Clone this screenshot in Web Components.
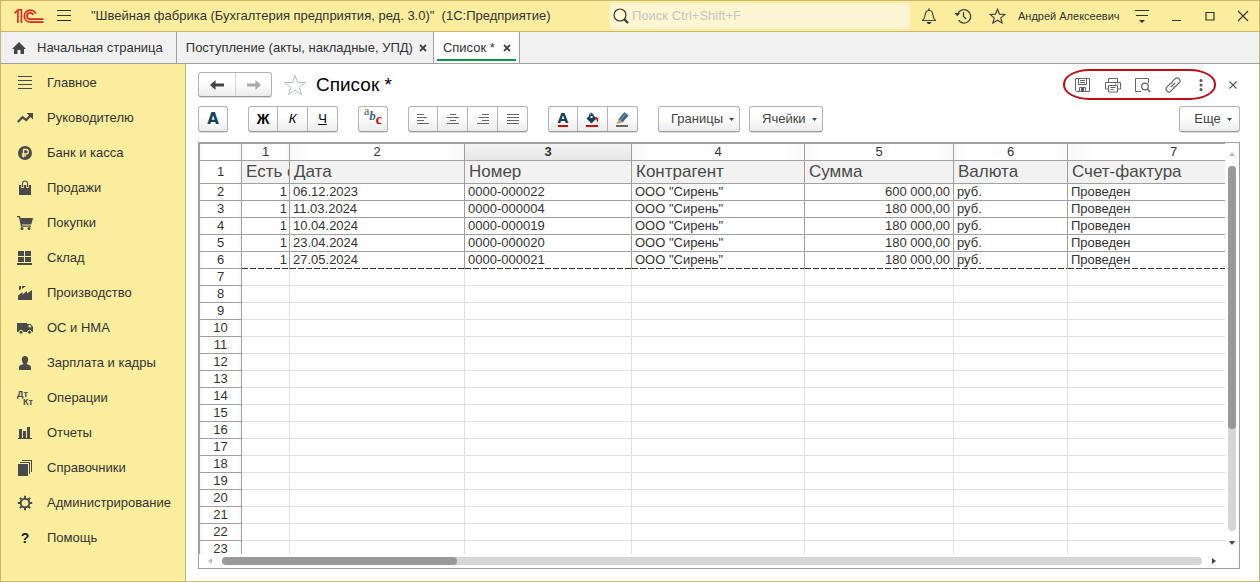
<!DOCTYPE html>
<html lang="ru">
<head>
<meta charset="utf-8">
<title>Список — 1С:Предприятие</title>
<style>
  html, body { margin: 0; height: 100%; }
  body {
    --yellow: #fbed9e;
    --gold: #c8b96a;
    --line: #a0a0a0;
    --ink: #333;
    font: 13px/16px "Liberation Sans", Arial, sans-serif;
    color: var(--ink);
    background: #fff;
  }
</style>
</head>
<body>
<app-window>
  <title-bar slot="title" user="Андрей Алексеевич">"Швейная фабрика (Бухгалтерия предприятия, ред. 3.0)"&nbsp; (1С:Предприятие)</title-bar>

  <tab-strip slot="tabs">
    <tab-item icon="home">Начальная страница</tab-item>
    <tab-item closable>Поступление (акты, накладные, УПД)</tab-item>
    <tab-item closable active>Список *</tab-item>
  </tab-strip>

  <side-menu slot="side">
    <side-item icon="lines">Главное</side-item>
    <side-item icon="trend">Руководителю</side-item>
    <side-item icon="ruble">Банк и касса</side-item>
    <side-item icon="bag">Продажи</side-item>
    <side-item icon="cart">Покупки</side-item>
    <side-item icon="boxes">Склад</side-item>
    <side-item icon="factory">Производство</side-item>
    <side-item icon="truck">ОС и НМА</side-item>
    <side-item icon="person">Зарплата и кадры</side-item>
    <side-item icon="dtkt">Операции</side-item>
    <side-item icon="chart">Отчеты</side-item>
    <side-item icon="books">Справочники</side-item>
    <side-item icon="gear">Администрирование</side-item>
    <side-item icon="question">Помощь</side-item>
  </side-menu>

  <page-header>Список *</page-header>

  <tool-bar>
    <tool-group><tool-button icon="fontA" label="Шрифт"></tool-button></tool-group>
    <tool-group>
      <tool-button class="bold">Ж</tool-button>
      <tool-button class="italic">К</tool-button>
      <tool-button class="under">Ч</tool-button>
    </tool-group>
    <tool-group><tool-button icon="abc" label="Стиль текста"></tool-button></tool-group>
    <tool-group>
      <tool-button icon="alignLeft" label="Влево"></tool-button>
      <tool-button icon="alignCenter" label="По центру"></tool-button>
      <tool-button icon="alignRight" label="Вправо"></tool-button>
      <tool-button icon="alignJustify" label="По ширине"></tool-button>
    </tool-group>
    <tool-group>
      <tool-button icon="textColor" label="Цвет текста"></tool-button>
      <tool-button icon="fill" label="Цвет фона"></tool-button>
      <tool-button icon="pencil" label="Цвет рамки"></tool-button>
    </tool-group>
    <tool-group><tool-button menu>Границы</tool-button></tool-group>
    <tool-group class="near"><tool-button menu>Ячейки</tool-button></tool-group>
    <tool-group class="end"><tool-button menu>Еще</tool-button></tool-group>
  </tool-bar>

  <spread-sheet></spread-sheet>
</app-window>

<script>
const svg = (w, h, body) =>
  `<svg width="${w}" height="${h}" viewBox="0 0 ${w} ${h}" fill="none" aria-hidden="true">${body}</svg>`;
const bars = (rows) => svg(12, 10, rows.map(([x, w], i) =>
  `<path fill="#666" d="M${x} ${i * 3}h${w}v1h-${w}z"/>`).join(""));

const ICONS = {
  logo: svg(30, 16, `<g stroke="#e0241f" stroke-width="1.7">
    <path d="M.6 5.2 3.9 2.2V15M3.6 1.8 7.4 1.8V15" stroke-width="1.6"/>
    <path d="M21.8 5.6A6 6 0 1 0 16 14.1h13.4"/>
    <path d="M19.2 6.9A3.2 3.2 0 1 0 16 11.2h13.4"/></g>`),
  burger: svg(14, 12, `<path fill="#333" d="M0 0h14v1H0zM0 5h14v1H0zM0 10h14v1H0z"/>`),
  search: svg(16, 16, `<circle cx="7" cy="7" r="6" stroke="#333" stroke-width="1.2"/><path d="m11.500 11.500 3.500 3.500" stroke="#333" stroke-width="2.2"/>`),
  bell: svg(16, 16, `<path d="M1.500 12.500c2-1.600 2.500-3.600 2.700-6C4.400 4 6 2.500 8 2.500s3.600 1.500 3.800 4c.2 2.400.7 4.400 2.700 6z" stroke="#444" stroke-width="1.200" stroke-linejoin="round"/><path fill="#333" d="M7.300.5h1.400v2H7.300zM5.500 14h5l-1.500 2h-2z"/>`),
  history: svg(18, 16, `<path d="M3.600 6.500A6.700 6.700 0 1 1 4.500 12.200" stroke="#444" stroke-width="1.300"/><path fill="#333" d="M.5 5h5.500L3.300 8.300z"/><path d="M9.500 4v4.500l2.700 2.500" stroke="#444" stroke-width="1.300"/>`),
  star: svg(17, 16, `<path d="m8.500 1.300 2 4.800 5.300.4-4 3.400 1.300 5.100-4.600-2.700L3.900 15l1.300-5.100-4-3.400 5.300-.4z" stroke="#444" stroke-width="1.200"/>`),
  starBig: svg(24, 22, `<path d="m12 1.500 2.600 7h7.800l-6.200 4.700 2.200 7.300-6.400-4.400-6.400 4.400 2.200-7.300L1.600 8.500h7.800z" stroke="#b4bac2" stroke-width="1"/>`),
  service: svg(14, 14, `<path fill="#333" d="M0 1h14v1H0zM1 6h12v1H1zM4 11h6l-3 3z"/>`),
  minimize: svg(10, 12, `<path fill="#333" d="M1 10h9v1H1z"/>`),
  maximize: svg(10, 10, `<path d="M1 1.500h8v7.500H1z" stroke="#333" stroke-width="1.200"/>`),
  close: svg(12, 12, `<path d="m1 1 10 10M11 1 1 11" stroke="#333" stroke-width="1.100"/>`),
  closeSmall: svg(8, 8, `<path d="m.5.5 7 7M7.500.5l-7 7" stroke="#555" stroke-width="1.100"/>`),
  tabClose: svg(8, 8, `<path d="m1 1 6 6M7 1 1 7" stroke="#444" stroke-width="1.800"/>`),
  home: svg(14, 12, `<path fill="#444" d="M7 0 14 7h-2v5H8.500V8h-3v4H2V7H0z"/>`),
  back: svg(14, 10, `<path fill="#444" d="M0 5 5.500 0v3.500H14v3H5.500V10z"/>`),
  forward: svg(14, 10, `<path fill="#aaa" d="M14 5 8.500 0v3.500H0v3h8.500V10z"/>`),

  lines: svg(16, 16, `<path fill="#4a4a4a" d="M1 1h14v1H1zM1 5h14v1H1zM1 9h14v1H1zM1 13h14v1H1z"/>`),
  trend: svg(16, 16, `<path d="m.8 12 4.700-4.700L9.300 10l4-4.500" stroke="#4a4a4a" stroke-width="2.200"/><path fill="#4a4a4a" d="M9.500 3H16v6.500z"/>`),
  ruble: svg(16, 16, `<circle cx="8" cy="8" r="7" fill="#4a4a4a"/><path d="M6.500 12.500v-8h2.600a2.200 2.200 0 0 1 0 4.500H4.700M4.700 10.800h4.500" stroke="#fbed9e" stroke-width="1.300"/>`),
  bag: svg(16, 16, `<path fill="#4a4a4a" d="M2 5h12v10H2z"/><path d="M5.500 8V3.500a2.500 2.500 0 0 1 5 0V8" stroke="#fbed9e" stroke-width="2.600"/><path d="M5.500 7V3.500a2.500 2.500 0 0 1 5 0V7" stroke="#4a4a4a" stroke-width="1.100"/>`),
  cart: svg(16, 16, `<path d="M0 1.600h2.500l2 9.600h9.500" stroke="#4a4a4a" stroke-width="1.300"/><path fill="#4a4a4a" d="M3 3h13l-1.700 6.500H4.300z"/><circle cx="5" cy="13.400" r="1.500" fill="#4a4a4a"/><circle cx="12" cy="13.400" r="1.500" fill="#4a4a4a"/>`),
  boxes: svg(16, 16, `<path fill="#4a4a4a" d="M1 1h6v5H1zM8 1h6v5H8zM1 7h6v5H1zM8 7h6v5H8zM0 13h15v2H0z"/>`),
  factory: svg(16, 16, `<path fill="#4a4a4a" d="M1 15V10.500L5.500 7v2.500L10 6v2.500L15 5v10zM2 1h2v3L2 5.500zM5 1h4L5 4z"/>`),
  truck: svg(16, 16, `<path fill="#4a4a4a" d="M0 3h10v9H0zM10 4h3.500L16 7v5h-6z"/><path fill="#fbed9e" d="M11.500 5H13l1.700 2.200h-3.200z"/><g fill="#4a4a4a" stroke="#fbed9e"><circle cx="4" cy="12.200" r="2"/><circle cx="12.500" cy="12.200" r="2"/></g>`),
  person: svg(16, 16, `<path fill="#4a4a4a" d="M8 1c2 0 3.200 1.500 3.200 3.500S10 8.500 9.500 9c1.500.8 4.500.8 4.500 3.500V15H2v-2.500C2 9.800 5 9.800 6.500 9 6 8.500 4.800 6.500 4.800 4.500S6 1 8 1z"/>`),
  dtkt: `<span class="dt">Дт</span><span class="kt">Кт</span>`,
  chart: svg(16, 16, `<path fill="#4a4a4a" d="M2 4h3v9H2zM6 6h3v7H6zM10 2h3v11h-3zM1 13h14v1H1z"/>`),
  books: svg(16, 16, `<path fill="#4a4a4a" d="M1 4h10v12H1zM3 2h10v12h-1V3H3zM5 0h10v12h-1V1H5z"/>`),
  gear: svg(16, 16, `<circle cx="8" cy="8" r="4.300" stroke="#4a4a4a" stroke-width="1.900"/><path d="M8 .8V3M8 13v2.200M.8 8H3M13 8h2.200M2.900 2.900l1.600 1.600M11.500 11.500l1.600 1.600M2.900 13.100l1.600-1.600M11.500 4.500l1.600-1.600" stroke="#4a4a4a" stroke-width="2"/>`),
  question: `<b class="q">?</b>`,

  fontA: `<b class="fa">A</b>`,
  textColor: `<b class="fa small">A</b>`,
  abc: `<span class="abc"><i class="a">a</i><b class="b">b</b><b class="c">c</b></span>`,
  alignLeft: bars([[0, 7], [0, 10], [0, 7], [0, 12]]),
  alignCenter: bars([[3, 6], [0, 12], [3, 6], [0, 12]]),
  alignRight: bars([[5, 7], [2, 10], [5, 7], [0, 12]]),
  alignJustify: bars([[0, 12], [0, 12], [0, 12], [0, 12]]),
  fill: svg(13, 15, `<path fill="#14405f" d="M5.500 1.500 10.500 6.500 5.500 11.500.5 6.500z"/><path d="M3.500 5V2.200a2 2 0 0 1 3.500 0V5" stroke="#14405f"/><path fill="#fff" d="M4.500 4h2v2h-2z"/><path fill="#d40000" d="M9.500 5c2.500 0 3 2 2.500 5.500L10.500 8z"/><path fill="#d40000" d="M0 13h12v2H0z"/>`),
  pencil: svg(13, 15, `<path fill="#3c6786" d="m8.500 0 4 3.500-6 7L2.500 7z"/><path fill="#d8a45c" d="M2.500 7l4 3.500L.5 12z"/><path d="m10 1.500-6 7" stroke="#7ea4bd"/><path fill="#666" d="M0 13h12v2H0z"/>`),
  caret: svg(5, 3, `<path fill="#444" d="M0 0h5L2.500 3z"/>`),

  save: svg(16, 16, `<path d="M.5 1.500h14v13h-13l-1-1z" stroke="#666"/><path d="M3.500 1.500v6h8v-6M5 3.500h5M5 5.500h5" stroke="#666"/><path d="M4.500 14.500v-4h6v4" stroke="#666"/><path fill="#555" d="M6 11h3v3H6z"/>`),
  print: svg(16, 16, `<path d="M3.500 5V1.500h9V5M3.500 12H.5V5.500h15V12h-3M3.500 8.500h9v6.500h-9zM5.500 10.500h5M5.500 12.500h3" stroke="#666"/><path fill="#666" d="M10 6.500h1v1h-1zM12.500 6.500h1v1h-1z"/>`),
  preview: svg(16, 16, `<path d="M6 14.500H.5v-13h13V6" stroke="#666"/><circle cx="10" cy="9.500" r="3.300" stroke="#666" stroke-width="1.300"/><path d="m12.200 12 3 3" stroke="#666" stroke-width="1.500"/>`),
  link: svg(16, 16, `<g stroke="#666" stroke-width="1.200"><path d="m6 10 4-4M6.500 5.500l3.600-3.600a2.700 2.700 0 0 1 4 4l-3.600 3.600a2 2 0 0 1-2 .3M9.500 10.500l-3.600 3.600a2.700 2.700 0 0 1-4-4l3.600-3.600a2 2 0 0 1 2-.3"/></g>`),
  dots: svg(4, 14, `<circle cx="2" cy="2.500" r="1.500" fill="#555"/><circle cx="2" cy="7" r="1.500" fill="#555"/><circle cx="2" cy="11.500" r="1.500" fill="#555"/>`),
};

/* Shared base: stamps a template into an open shadow root. */
class Base extends HTMLElement {
  connectedCallback() {
    if (this.shadowRoot) return;
    const t = document.createElement("template");
    t.innerHTML = `<style>*{box-sizing:border-box}${this.css()}</style>${this.html()}`;
    this.attachShadow({ mode: "open" }).append(t.content.cloneNode(true));
  }
  css() { return ":host{display:block}"; }
  html() { return "<slot></slot>"; }
}

customElements.define("ui-icon", class extends Base {
  css() { return `
    :host { display: inline-flex; flex: none; align-items: center; justify-content: center; }
    svg { display: block; }
    .dt, .kt { font: bold 9px/8px "Liberation Sans", sans-serif; color: #4a4a4a; }
    :host([name=dtkt]) { flex-direction: column; }
    .dt { align-self: flex-start; } .kt { align-self: flex-end; }
    .q { font-size: 14px; color: #222; }
    .fa { font: bold 15px/16px "DejaVu Sans", sans-serif; color: #14405f; }
    .fa.small { font-size: 14px; line-height: 13px; border-bottom: 2px solid #d40000; }
    .abc { display: flex; }
    .a { font: 12px/9px "Liberation Serif", serif; color: #555; }
    .b { font: bold italic 13px/17px "Liberation Serif", serif; color: #3c6786; }
    .c { font: bold 14px/25px "Liberation Serif", serif; color: #d40000; }`; }
  html() { return ICONS[this.getAttribute("name")] || ""; }
});

customElements.define("app-window", class extends Base {
  css() { return `
    :host { display: grid; grid-template: auto auto 1fr / 186px 1fr; height: 100vh; position: relative;
            border-right: 1px solid var(--gold); border-bottom: 1px solid var(--gold); box-sizing: border-box; }
    header, nav.tabs { grid-column: 1 / -1; min-width: 0; }
    nav.side { border-right: 1px solid var(--gold); border-left: 1px solid var(--gold); background: var(--yellow); }
    main { display: flex; flex-direction: column; min-width: 0; min-height: 0; padding: 5px 19px 12px 12px; }`; }
  html() { return `
    <header><slot name="title"></slot></header>
    <nav class="tabs"><slot name="tabs"></slot></nav>
    <nav class="side"><slot name="side"></slot></nav>
    <main><slot></slot></main>`; }
});

customElements.define("title-bar", class extends Base {
  css() { return `
    :host { display: flex; align-items: center; height: 32px; box-sizing: border-box; padding-left: 13px;
            background: var(--yellow); border: 1px solid var(--gold); border-right: 0; }
    button { display: flex; align-items: center; justify-content: center; flex: none; width: 34px; height: 30px;
             padding: 0; border: 0; background: none; }
    button.menu { width: 14px; margin: 0 20px 0 13px; }
    button:last-child { width: 32px; }
    .title { flex: 1; min-width: 0; white-space: nowrap; overflow: hidden; }
    label { display: flex; align-items: center; gap: 3px; flex: none; width: 300px; height: 26px; margin-right: 2px;
            padding: 0 3px; border-radius: 3px; background: #fef6d2; }
    input { flex: 1; min-width: 0; padding: 0; border: 0; outline: 0; background: none; font: inherit; }
    input::placeholder { color: #c9c5b8; opacity: 1; }
    .user { flex: none; width: 111px; padding-left: 4px; font-size: 11px; white-space: nowrap; }`; }
  html() {
    const b = (n, l, c = "") => `<button class="${c}" aria-label="${l}"><ui-icon name="${n}"></ui-icon></button>`;
    return `<ui-icon name="logo"></ui-icon>${b("burger", "Меню", "menu")}
      <span class="title"><slot></slot></span>
      <label><ui-icon name="search"></ui-icon><input type="text" placeholder="Поиск Ctrl+Shift+F" aria-label="Поиск"></label>
      ${b("bell", "Оповещения")}${b("history", "История")}${b("star", "Избранное")}
      <span class="user">${this.getAttribute("user")}</span>
      ${b("service", "Сервис")}${b("minimize", "Свернуть")}${b("maximize", "Развернуть")}${b("close", "Закрыть")}`;
  }
});

customElements.define("tab-strip", class extends Base {
  css() { return `
    :host { display: flex; height: 32px; box-sizing: border-box; background: #f1f1f1;
            border-bottom: 1px solid var(--line); border-left: 1px solid var(--gold); }`; }
});

customElements.define("tab-item", class extends Base {
  css() { return `
    :host { display: flex; align-items: center; gap: 6px; padding: 0 6px 0 9px; border-right: 1px solid var(--line); white-space: nowrap; }
    :host([icon]) { gap: 11px; padding: 0 13px 0 11px; }
    :host([active]) { position: relative; gap: 8px; padding-right: 8px; background: #fff; }
    :host([active])::after { content: ""; position: absolute; left: 3px; right: 3px; bottom: 2px; height: 2px; background: #0d9444; }
    a { color: inherit; text-decoration: none; }
    button { display: flex; padding: 0; border: 0; background: none; }`; }
  html() {
    const icon = this.getAttribute("icon");
    return (icon ? `<ui-icon name="${icon}"></ui-icon>` : "") + `<a href="#"><slot></slot></a>` +
      (this.hasAttribute("closable") ? `<button aria-label="Закрыть вкладку"><ui-icon name="tabClose"></ui-icon></button>` : "");
  }
});

customElements.define("side-menu", class extends Base {
  css() { return ":host { display: block; padding-top: 1px; }"; }
});

customElements.define("side-item", class extends Base {
  css() { return `
    :host { display: block; }
    a { display: flex; align-items: center; gap: 14px; height: 35px; padding-left: 16px; color: inherit; text-decoration: none; white-space: nowrap; }
    ui-icon { width: 16px; height: 16px; }`; }
  html() { return `<a href="#"><ui-icon name="${this.getAttribute("icon")}"></ui-icon><slot></slot></a>`; }
});

customElements.define("page-header", class extends Base {
  css() { return `
    :host { display: flex; align-items: center; height: 31px; }
    .nav { display: flex; height: 25px; border: 1px solid #b4b4b4; border-bottom-color: #999; border-radius: 3px;
           background: linear-gradient(#fff 40%, #ececec); box-shadow: 0 1px 0 #ddd; }
    button { display: flex; align-items: center; justify-content: center; width: 36px; padding: 0; border: 0; background: none; }
    .nav button + button { border-left: 1px solid #d4d4d4; }
    button.fav { width: 24px; margin: 0 9px 0 11px; }
    h1 { flex: 1; margin: 0; font-size: 19px; line-height: 24px; font-weight: normal; color: #000; white-space: nowrap; }
    .actions { display: flex; align-items: center; height: 31px; padding-left: 3px; border: 2px solid #c00d17; border-radius: 26px / 15px; }
    .actions button { width: 30px; }
    .actions button:last-child { width: 26px; }
    button.close { width: 14px; margin-left: 10px; }`; }
  html() {
    const b = (n, l, c = "") => `<button class="${c}" aria-label="${l}"><ui-icon name="${n}"></ui-icon></button>`;
    return `<div class="nav">${b("back", "Назад")}${b("forward", "Вперед")}</div>${b("starBig", "В избранное", "fav")}
      <h1><slot></slot></h1>
      <div class="actions">${b("save", "Сохранить")}${b("print", "Печать")}${b("preview", "Просмотр")}${b("link", "Ссылка")}${b("dots", "Еще действия")}</div>
      ${b("closeSmall", "Закрыть", "close")}`;
  }
});

customElements.define("tool-bar", class extends Base {
  css() { return `:host { display: flex; gap: 20px; padding: 6px 0 10px; }
    ::slotted(.near) { margin-left: -11px; }
    ::slotted(.end) { margin-left: auto; }`; }
});

customElements.define("tool-group", class extends Base {
  css() { return `
    :host { display: flex; height: 26px; box-sizing: border-box; border: 1px solid #b4b4b4; border-bottom-color: #999; border-radius: 3px;
            background: linear-gradient(#fff 40%, #ececec); box-shadow: 0 1px 0 #ddd; }
    ::slotted(tool-button:not(:first-child)) { border-left: 1px solid #b4b4b4; }`; }
});

customElements.define("tool-button", class extends Base {
  css() { return `
    :host { display: flex; width: 30px; box-sizing: border-box; }
    :host(:first-child) { width: 28px; }
    :host([menu]) { width: auto; min-width: 59px; }
    button { display: flex; flex: 1; align-items: center; justify-content: center; gap: 6px; padding: 0; border: 0; background: none;
             font: inherit; color: #444; }
    :host([menu]) button { padding: 0 5px 0 12px; }
    :host(.bold) button { font-weight: bold; font-size: 14px; color: #000; }
    :host(.italic) button { font-style: italic; color: #000; }
    :host(.under) button { text-decoration: underline; color: #000; }`; }
  html() {
    const icon = this.getAttribute("icon"), label = this.getAttribute("label");
    return `<button${label ? ` aria-label="${label}"` : ""}>${icon ? `<ui-icon name="${icon}"></ui-icon>` : "<slot></slot>"}${
      this.hasAttribute("menu") ? `<ui-icon name="caret"></ui-icon>` : ""}</button>`;
  }
});

customElements.define("scroll-bar", class extends Base {
  css() { return `
    :host { display: flex; align-items: center; justify-content: space-between; gap: 10px; padding: 0 9px; }
    .track { flex: 1; height: 8px; border-radius: 4px; background: #d6d6d6; }
    .thumb { width: 24%; height: 8px; border-radius: 4px; background: #999; }
    .s, .e { border: 3px solid transparent; }
    .s { border-right: 4px solid #bbb; border-left: 0; }
    .e { border-left: 4px solid #444; border-right: 0; }
    :host([vertical]) { flex-direction: column; padding: 9px 0; }
    :host([vertical]) .track { width: 8px; }
    :host([vertical]) .thumb { width: 8px; height: 72%; }
    :host([vertical]) .s { border: 3px solid transparent; border-bottom: 4px solid #bbb; border-top: 0; }
    :host([vertical]) .e { border: 3px solid transparent; border-top: 4px solid #444; border-bottom: 0; }`; }
  html() { return `<span class="s"></span><div class="track"><div class="thumb"></div></div><span class="e"></span>`; }
});

const HEAD = ["Есть ф", "Дата", "Номер", "Контрагент", "Сумма", "Валюта", "Счет-фактура"];
const WIDTHS = [48, 175, 167, 173, 149, 114, 212];
const DATA = [
  ["06.12.2023", "0000-000022", "600 000,00"],
  ["11.03.2024", "0000-000004", "180 000,00"],
  ["10.04.2024", "0000-000019", "180 000,00"],
  ["23.04.2024", "0000-000020", "180 000,00"],
  ["27.05.2024", "0000-000021", "180 000,00"],
].map(([d, n, s]) => ["1", d, n, 'ООО "Сирень"', s, "руб.", "Проведен"]);
const LAST_ROW = 23, ACTIVE_COL = 3;

customElements.define("spread-sheet", class extends Base {
  css() { return `
    :host { display: grid; grid-template: 1fr 14px / 1fr 14px; flex: 1; min-height: 0; border: 1px solid var(--line); }
    .view { min-width: 0; min-height: 0; overflow: hidden; border: 1px solid var(--line); border-width: 1px 0 0 1px; }
    scroll-bar:last-child { grid-column: 1 / 2; }
    table { table-layout: fixed; width: 1080px; border-collapse: separate; border-spacing: 0; }
    th, td { height: 17px; padding: 0 3px; border: 0 solid #e2e2e2; border-width: 0 1px 1px 0; font-weight: normal;
             line-height: 16px; text-align: left; white-space: nowrap; overflow: hidden; }
    th { padding: 0; border-color: var(--line); text-align: center; background: linear-gradient(90deg, #f8f8f8, #fff 12%, #fff 88%, #f8f8f8); }
    th.on { font-weight: bold; background: linear-gradient(#f4f4f4, #e6e6e6); }
    .names th, .names td { line-height: 22px; }
    .names td { padding: 0 4px; font-size: 17px; color: #4a4a4a; background: #f2f2f2; }
    .names td, .data td { border-color: var(--line); }
    .data td:nth-child(2) { padding-right: 2px; text-align: right; }
    .data td:nth-child(6) { text-align: right; }
    .data.last td { padding-bottom: 1px; border-bottom: 0; background: repeating-linear-gradient(90deg, #333 0 6px, #fff 6px 8px) bottom / 100% 1px no-repeat; }`; }
  html() {
    const row = (n, cells, cls = "") => `<tr class="${cls}"><th scope="row">${n}</th>${cells.map(c => `<td>${c}</td>`).join("")}</tr>`;
    const blank = WIDTHS.map(() => "");
    let body = row(1, HEAD, "names");
    DATA.forEach((r, i) => { body += row(i + 2, r, i === DATA.length - 1 ? "data last" : "data"); });
    for (let n = DATA.length + 2; n <= LAST_ROW; n++) body += row(n, blank);
    return `<div class="view"><table>
      <colgroup><col style="width:42px">${WIDTHS.map(w => `<col style="width:${w}px">`).join("")}</colgroup>
      <thead><tr><th></th>${WIDTHS.map((_, i) => `<th scope="col"${i + 1 === ACTIVE_COL ? ' class="on"' : ""}>${i + 1}</th>`).join("")}</tr></thead>
      <tbody>${body}</tbody></table></div>
      <scroll-bar vertical></scroll-bar><scroll-bar></scroll-bar>`;
  }
});
</script>
</body>
</html>
